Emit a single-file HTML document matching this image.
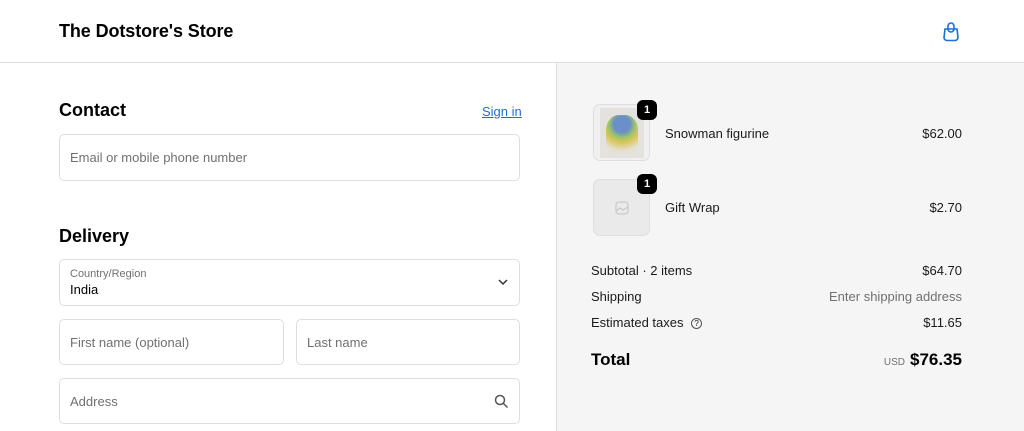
<!DOCTYPE html>
<html><head><meta charset="utf-8"><style>
*{box-sizing:border-box;margin:0;padding:0}
body{width:1024px;height:431px;overflow:hidden;font-family:"Liberation Sans",sans-serif;background:#fff;color:#000;position:relative}
.hdr{height:63px;border-bottom:1px solid #dedede;position:relative}
.hdr h1{position:absolute;left:59px;top:21px;font-size:18px;font-weight:600;letter-spacing:-0.1px}
.right{position:absolute;left:556px;top:63px;right:0;bottom:0;background:#f5f5f5;border-left:1px solid #dedede}
.a{position:absolute}
.inp{position:absolute;border:1px solid #dedede;border-radius:5px;font-size:13px;color:#707070;padding-left:10px;display:flex;align-items:center}
h2{position:absolute;font-size:18px;font-weight:600}
.t{position:absolute;font-size:13px;color:#1a1a1a}
.r{position:absolute;right:62px;font-size:13px;color:#1a1a1a;text-align:right}
.thumb{position:absolute;left:593px;width:57px;height:57px;border:1px solid #dedede;border-radius:7px;background:#eaeaea}
.badge{position:absolute;width:20px;height:20px;background:#000;color:#fff;border-radius:6px;font-size:11px;font-weight:bold;text-align:center;line-height:20px}
</style></head><body>
<div class="hdr"><h1>The Dotstore's Store</h1>
<svg class="a" style="left:941px;top:21px" width="20" height="21" viewBox="0 0 20 21" fill="none" stroke="#1c6fd9" stroke-width="1.6"><path d="M4 8h12l1 8.5a3 3 0 0 1-3 3H6a3 3 0 0 1-3-3z"/><rect x="7" y="2" width="6" height="9" rx="3"/></svg>
</div>
<h2 style="left:59px;top:100px">Contact</h2>
<div class="a" style="left:482px;top:104px;font-size:13px;color:#1c6fd9;text-decoration:underline">Sign in</div>
<div class="inp" style="left:59px;top:134px;width:461px;height:47px">Email or mobile phone number</div>
<h2 style="left:59px;top:226px">Delivery</h2>
<div class="inp" style="left:59px;top:259px;width:461px;height:47px;display:block;padding-top:8px">
<div style="font-size:11px;color:#707070">Country/Region</div><div style="color:#000;font-size:13px;margin-top:2px">India</div>
<svg class="a" style="left:438px;top:18px" width="10" height="8" viewBox="0 0 10 8" fill="none" stroke="#333" stroke-width="1.5"><path d="M1 2l4 4 4-4"/></svg></div>
<div class="inp" style="left:59px;top:319px;width:225px;height:46px">First name (optional)</div>
<div class="inp" style="left:296px;top:319px;width:224px;height:46px">Last name</div>
<div class="inp" style="left:59px;top:378px;width:461px;height:46px">Address
<svg class="a" style="left:434px;top:15px" width="15" height="15" viewBox="0 0 15 15" fill="none" stroke="#555" stroke-width="1.5"><circle cx="6" cy="6" r="4.5"/><path d="M9.5 9.5l4 4"/></svg></div>
<div class="right"></div>
<div class="thumb" style="top:104px;background:#f0f0f0;overflow:hidden"><div style="position:absolute;left:6px;top:3px;width:44px;height:50px;background:#e4e2de"></div><div style="position:absolute;left:12px;top:10px;width:32px;height:38px;border-radius:40% 40% 30% 30%;background:radial-gradient(circle at 50% 25%,#6b8fc9 25%,#9cc46a 40%,#d8c65a 55%,#e6e0d0 80%)"></div></div>
<div class="badge" style="left:637px;top:100px">1</div>
<div class="t" style="left:665px;top:126px">Snowman figurine</div>
<div class="r" style="top:126px">$62.00</div>
<div class="thumb" style="top:179px"><svg class="a" style="left:21px;top:21px" width="14" height="14" viewBox="0 0 14 14" fill="none" stroke="#c8c8c8" stroke-width="1.2"><rect x="1" y="1" width="12" height="12" rx="3"/><path d="M1 10l4-3 3 2 5-3"/></svg></div>
<div class="badge" style="left:637px;top:174px">1</div>
<div class="t" style="left:665px;top:200px">Gift Wrap</div>
<div class="r" style="top:200px">$2.70</div>
<div class="t" style="left:591px;top:263px">Subtotal · 2 items</div>
<div class="r" style="top:263px">$64.70</div>
<div class="t" style="left:591px;top:289px">Shipping</div>
<div class="r" style="top:289px;color:#707070">Enter shipping address</div>
<div class="t" style="left:591px;top:315px">Estimated taxes <span style="display:inline-block;width:11px;height:11px;border:1px solid #555;border-radius:50%;font-size:8px;text-align:center;line-height:10px;margin-left:4px;vertical-align:1px">?</span></div>
<div class="r" style="top:315px">$11.65</div>
<div class="a" style="left:591px;top:350px;font-size:17px;font-weight:600">Total</div>
<div class="r" style="top:350px;font-size:17px;font-weight:600;color:#000"><span style="font-size:10px;font-weight:normal;color:#707070;margin-right:5px">USD</span>$76.35</div>
</body></html>
